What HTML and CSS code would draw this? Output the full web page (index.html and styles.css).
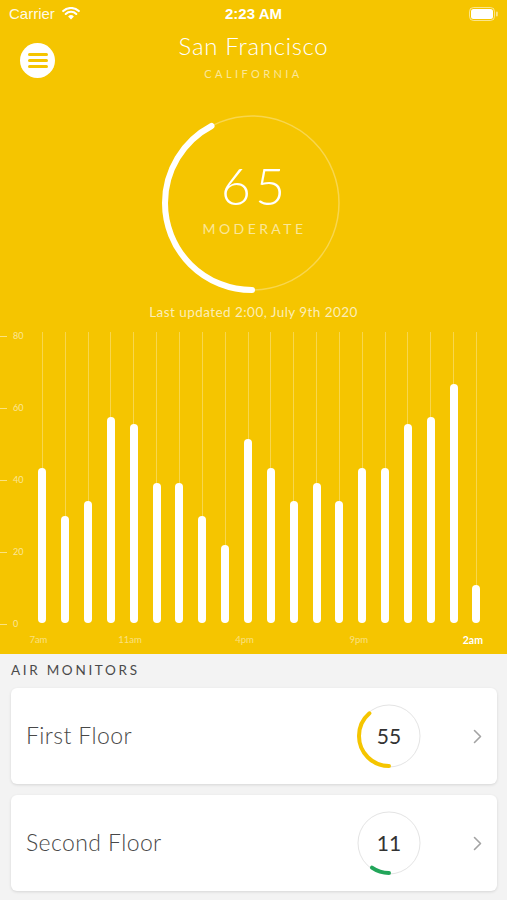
FILE: index.html
```html
<!DOCTYPE html>
<html lang="en">
<head>
<meta charset="utf-8">
<title>Air Quality</title>
<link rel="stylesheet" href="styles.css">
</head>
<body>
<div class="screen">
  <section class="hero">
    <div class="status">
      <div class="status-left">
        <span class="carrier">Carrier</span>
        <svg class="wifi" width="18" height="13" viewBox="0 0 18 13">
          <path d="M9 12.6 L6.1 9.5 A4.2 4.2 0 0 1 11.9 9.5 Z" fill="#fff"/>
          <path d="M3.7 6.9 A7.6 7.6 0 0 1 14.3 6.9" fill="none" stroke="#fff" stroke-width="2.1" stroke-linecap="round"/>
          <path d="M1.2 4.1 A11.3 11.3 0 0 1 16.8 4.1" fill="none" stroke="#fff" stroke-width="2.1" stroke-linecap="round"/>
        </svg>
      </div>
      <div class="status-time">2:23 AM</div>
      <div class="status-right">
        <svg width="30" height="14" viewBox="0 0 30 14">
          <rect x="0.5" y="0.5" width="25" height="13" rx="4" fill="none" stroke="rgba(255,255,255,0.55)"/>
          <rect x="2" y="2" width="22" height="10" rx="2.5" fill="#fff"/>
          <rect x="27" y="4.5" width="1.8" height="5" rx="0.9" fill="rgba(255,255,255,0.55)"/>
        </svg>
      </div>
    </div>

    <header class="header">
      <button class="menu" aria-label="Menu"><span></span><span></span><span></span></button>
      <div class="title">
        <h1>San Francisco</h1>
        <p>CALIFORNIA</p>
      </div>
      <div></div>
    </header>

    <div class="gauge">
      <svg class="gauge-ring" width="186" height="186" viewBox="0 0 186 186">
        <circle cx="93" cy="93" r="87" fill="none" stroke="rgba(255,255,255,0.3)" stroke-width="1.5"/>
        <circle cx="93" cy="93" r="87" fill="none" stroke="#fff" stroke-width="6" stroke-linecap="round" stroke-dasharray="230.8 600" transform="rotate(90 93 93)"/>
      </svg>
      <div class="gauge-text">
        <div class="aqi">65</div>
        <div class="level">MODERATE</div>
      </div>
    </div>

    <p class="updated">Last updated 2:00, July 9th 2020</p>

    <div class="chart">
      <div class="yaxis">
        <div class="tick"><i></i><span>80</span></div>
        <div class="tick"><i></i><span>60</span></div>
        <div class="tick"><i></i><span>40</span></div>
        <div class="tick"><i></i><span>20</span></div>
        <div class="tick"><i></i><span>0</span></div>
      </div>
      <div class="plot">
        <div class="col"><div class="bar" style="height:155px"></div></div>
        <div class="col"><div class="bar" style="height:107px"></div></div>
        <div class="col"><div class="bar" style="height:122px"></div></div>
        <div class="col"><div class="bar" style="height:206px"></div></div>
        <div class="col"><div class="bar" style="height:199px"></div></div>
        <div class="col"><div class="bar" style="height:140px"></div></div>
        <div class="col"><div class="bar" style="height:140px"></div></div>
        <div class="col"><div class="bar" style="height:107px"></div></div>
        <div class="col"><div class="bar" style="height:78px"></div></div>
        <div class="col"><div class="bar" style="height:184px"></div></div>
        <div class="col"><div class="bar" style="height:155px"></div></div>
        <div class="col"><div class="bar" style="height:122px"></div></div>
        <div class="col"><div class="bar" style="height:140px"></div></div>
        <div class="col"><div class="bar" style="height:122px"></div></div>
        <div class="col"><div class="bar" style="height:155px"></div></div>
        <div class="col"><div class="bar" style="height:155px"></div></div>
        <div class="col"><div class="bar" style="height:199px"></div></div>
        <div class="col"><div class="bar" style="height:206px"></div></div>
        <div class="col"><div class="bar" style="height:239px"></div></div>
        <div class="col"><div class="bar" style="height:38px"></div></div>
      </div>
    </div>

    <div class="xaxis">
      <span>7am</span><span></span><span></span><span></span>
      <span>11am</span><span></span><span></span><span></span><span></span>
      <span>4pm</span><span></span><span></span><span></span><span></span>
      <span>9pm</span><span></span><span></span><span></span><span></span>
      <span class="now">2am</span>
    </div>
  </section>

  <section class="monitors">
    <h2>AIR MONITORS</h2>
    <div class="cards">
      <div class="card">
        <div class="card-name">First Floor</div>
        <div class="mini-gauge">
          <svg width="64" height="64" viewBox="0 0 64 64">
            <circle cx="32" cy="32" r="31" fill="none" stroke="#e4e4e4" stroke-width="1"/>
            <circle cx="32" cy="32" r="30" fill="none" stroke="#f5c500" stroke-width="4" stroke-linecap="round" stroke-dasharray="72.8 200" transform="rotate(90 32 32)"/>
          </svg>
          <span class="mini-value">55</span>
        </div>
        <svg class="chevron" width="9" height="15" viewBox="0 0 9 15">
          <polyline points="1.5,1.5 7.5,7.5 1.5,13.5" fill="none" stroke="#a3a3a3" stroke-width="1.6" stroke-linecap="round" stroke-linejoin="round"/>
        </svg>
      </div>
      <div class="card">
        <div class="card-name">Second Floor</div>
        <div class="mini-gauge">
          <svg width="64" height="64" viewBox="0 0 64 64">
            <circle cx="32" cy="32" r="31" fill="none" stroke="#e4e4e4" stroke-width="1"/>
            <circle cx="32" cy="32" r="30" fill="none" stroke="#22a55a" stroke-width="4" stroke-linecap="round" stroke-dasharray="18.1 200" transform="rotate(90 32 32)"/>
          </svg>
          <span class="mini-value">11</span>
        </div>
        <svg class="chevron" width="9" height="15" viewBox="0 0 9 15">
          <polyline points="1.5,1.5 7.5,7.5 1.5,13.5" fill="none" stroke="#a3a3a3" stroke-width="1.6" stroke-linecap="round" stroke-linejoin="round"/>
        </svg>
      </div>
    </div>
  </section>
</div>
</body>
</html>
```

FILE: styles.css
```css
* { box-sizing: border-box; }

html, body {
  margin: 0;
  padding: 0;
  background: #f3f3f3;
}

body {
  font-family: Lato, "Open Sans", "Liberation Sans", sans-serif;
  width: 507px;
  height: 900px;
  overflow: hidden;
}

.screen {
  display: flex;
  flex-direction: column;
  min-height: 900px;
}

/* ---------- Yellow hero ---------- */
.hero {
  background: #f5c500;
  color: #fff;
  padding-bottom: 8px;
}

.status {
  height: 28px;
  display: grid;
  grid-template-columns: 1fr auto 1fr;
  align-items: center;
  font-family: "Liberation Sans", Arial, sans-serif;
  font-size: 15px;
  line-height: 18px;
}

.status-left {
  display: flex;
  align-items: center;
  gap: 7px;
  padding-left: 9px;
  color: rgba(255, 255, 255, 0.92);
}

.wifi { margin-top: -1px; }

.status-time {
  font-weight: 700;
  text-align: center;
}

.status-right {
  display: flex;
  justify-content: flex-end;
  padding-right: 8px;
}

.header {
  display: grid;
  grid-template-columns: 1fr auto 1fr;
  padding-top: 4px;
}

.menu {
  justify-self: start;
  margin: 11px 0 0 20px;
  width: 35px;
  height: 35px;
  border: 0;
  padding: 0;
  border-radius: 50%;
  background: #fff;
  display: flex;
  flex-direction: column;
  align-items: center;
  justify-content: center;
  gap: 3.5px;
}

.menu span {
  display: block;
  width: 20px;
  height: 2.5px;
  border-radius: 1.5px;
  background: #f5c500;
}

.title {
  text-align: center;
}

.title h1 {
  margin: 0;
  font-size: 24px;
  line-height: 28px;
  font-weight: 300;
  letter-spacing: 0.7px;
  color: #fff;
}

.title p {
  margin: 7px 0 0;
  font-size: 11px;
  line-height: 14px;
  letter-spacing: 3.4px;
  padding-left: 0;
  color: rgba(255, 255, 255, 0.6);
}

/* ---------- Big gauge ---------- */
.gauge {
  margin-top: 29px;
  display: grid;
  justify-content: center;
  padding-right: 3px;
}

.gauge-ring,
.gauge-text {
  grid-area: 1 / 1;
}

.gauge-text {
  align-self: start;
  padding-top: 48.5px;
  text-align: center;
}

.aqi {
  font-size: 52px;
  line-height: 52px;
  font-weight: 300;
  letter-spacing: 4px;
  padding-left: 6px;
}

.level {
  margin-top: 10px;
  font-size: 14px;
  line-height: 16px;
  letter-spacing: 3.4px;
  padding-left: 5px;
  color: rgba(255, 255, 255, 0.6);
}

.updated {
  margin: 8px 0 0;
  text-align: center;
  font-size: 13.5px;
  line-height: 16px;
  letter-spacing: 0.45px;
  color: rgba(255, 255, 255, 0.72);
}

/* ---------- Chart ---------- */
.chart {
  margin-top: 12px;
  display: flex;
  align-items: flex-start;
}

.yaxis {
  width: 31px;
  height: 298px;
  margin-top: -1px;
  display: flex;
  flex-direction: column;
  justify-content: space-between;
}

.tick {
  height: 10px;
  display: flex;
  align-items: center;
  gap: 6px;
  font-size: 9px;
  line-height: 10px;
  color: rgba(255, 255, 255, 0.6);
}

.tick i {
  display: block;
  width: 7px;
  height: 1px;
  background: rgba(255, 255, 255, 0.5);
}

.plot {
  width: 456.8px;
  height: 291px;
  display: flex;
}

.col {
  flex: 1;
  display: flex;
  justify-content: center;
  align-items: flex-end;
  background: linear-gradient(rgba(255, 255, 255, 0.3), rgba(255, 255, 255, 0.3)) center / 1px 100% no-repeat;
}

.bar {
  width: 8px;
  border-radius: 4px;
  background: #fff;
}

.xaxis {
  margin-top: 5px;
  padding-left: 27px;
  display: flex;
  height: 12px;
}

.xaxis span {
  flex: 0 0 22.84px;
  display: flex;
  justify-content: center;
  white-space: nowrap;
  font-size: 9.5px;
  line-height: 12px;
  color: rgba(255, 255, 255, 0.5);
}

.xaxis .now {
  color: #fff;
  font-weight: 700;
  font-size: 10.5px;
}

/* ---------- Monitors ---------- */
.monitors {
  flex: 1;
  background: #f3f3f3;
  padding: 7.5px 10px 10px 11px;
}

.monitors h2 {
  margin: 0;
  font-size: 13.5px;
  line-height: 16px;
  font-weight: 400;
  letter-spacing: 2.7px;
  color: #4a4a4a;
}

.cards {
  margin-top: 10.5px;
  display: flex;
  flex-direction: column;
  gap: 11px;
}

.card {
  height: 96px;
  background: #fff;
  border-radius: 6px;
  box-shadow: 0 1px 3px rgba(0, 0, 0, 0.12);
  display: flex;
  align-items: center;
  padding: 0 15px;
}

.card-name {
  flex: 1;
  margin-top: -3px;
  font-size: 23px;
  font-weight: 300;
  letter-spacing: 0.4px;
  color: #484848;
}

.mini-gauge {
  display: grid;
  width: 64px;
  height: 64px;
}

.mini-gauge svg,
.mini-value {
  grid-area: 1 / 1;
}

.mini-value {
  place-self: center;
  margin-top: -2px;
  font-size: 21px;
  color: #333;
}

.chevron {
  margin-left: 52px;
}
```
